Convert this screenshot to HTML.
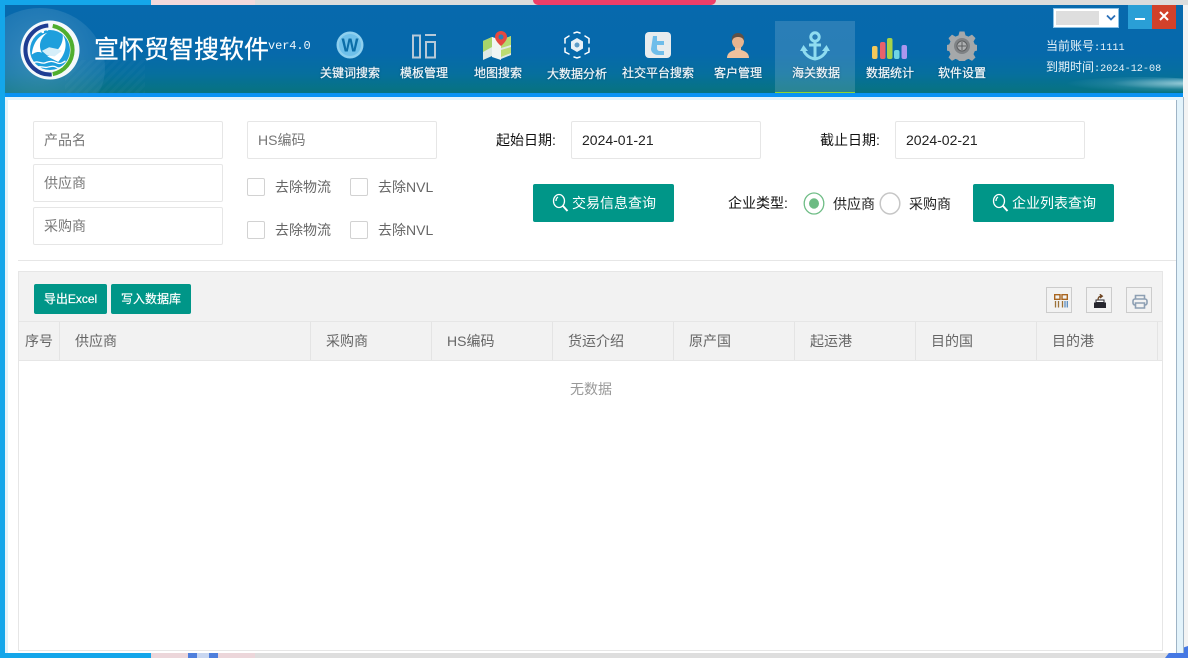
<!DOCTYPE html>
<html lang="zh"><head><meta charset="utf-8"><title>宣怀贸智搜软件</title>
<style>
html,body{margin:0;padding:0;width:1188px;height:658px;overflow:hidden;background:#f4f4f4;font-family:"Liberation Sans","Noto Sans CJK SC",sans-serif}
div,span,svg{position:absolute;box-sizing:border-box}
.t{white-space:nowrap;line-height:1}
.nav{top:67px;width:90px;text-align:center;color:#f2f6f8;font-size:12px;line-height:13px;white-space:nowrap;-webkit-text-stroke:.25px #eef4f8;text-shadow:0 0 2px rgba(0,40,70,.6)}
.inp{height:38px;width:190px;border:1px solid #e6e6e6;border-radius:2px;background:#fff;font-size:14px;line-height:36px;padding-left:10px;color:#777;white-space:nowrap}
.cb{width:18px;height:18px;border:1px solid #d2d2d2;border-radius:2px;background:#fff}
.lb{font-size:14px;line-height:18px;color:#666;white-space:nowrap}
.btn{background:#009688;color:#fff;border-radius:2px;white-space:nowrap;text-align:center}
.th{top:322px;height:38px;line-height:38px;font-size:14px;color:#666;white-space:nowrap}
.sep{top:322px;width:1px;height:38px;background:#e4e4e4}
.tool{top:287px;width:26px;height:26px;border:1px solid #ccc}
</style></head><body>
<!-- backdrop -->
<div style="left:0;top:0;width:151px;height:5px;background:#14a6ea"></div>
<div style="left:151px;top:0;width:104px;height:5px;background:#f2d9dc"></div>
<div style="left:255px;top:0;width:933px;height:5px;background:#dcdcdc"></div>
<div style="left:533px;top:0;width:183px;height:5px;background:#ee3e68;border-radius:0 0 12px 12px"></div>
<div style="left:0;top:0;width:5px;height:658px;background:#14a6ea"></div>
<div style="left:0;top:653px;width:151px;height:5px;background:#14a6ea"></div>
<div style="left:151px;top:653px;width:104px;height:5px;background:#ecd6da"></div>
<div style="left:188px;top:653px;width:30px;height:5px;background:#4f7fdc"></div>
<div style="left:197px;top:653px;width:12px;height:5px;background:#c8d6f0"></div>
<div style="left:255px;top:653px;width:933px;height:5px;background:#dedede"></div>
<div style="left:1184px;top:5px;width:4px;height:648px;background:#f3f3f3"></div>
<div style="left:1165px;top:646px;width:23px;height:12px;background:#4578e4;clip-path:polygon(20% 50%,100% 0,100% 100%,0 100%)"></div>

<!-- window -->
<div style="left:5px;top:97px;width:1179px;height:556px;background:#e3f3fb;border-right:1px solid #9fb4c6"></div>
<div style="left:8px;top:100px;width:1169px;height:553px;background:#fff;border-right:1px solid #9fb4c6"></div>

<!-- header -->
<div style="left:5px;top:5px;width:1178px;height:88px;background:linear-gradient(180deg,#0769ad 0%,#0669ab 55%,#066f9e 78%,#07737f 100%);overflow:hidden">
  <div style="left:-30px;top:3px;width:130px;height:120px;border-radius:50%;background:radial-gradient(circle at 50% 40%,rgba(130,185,215,.4),rgba(80,150,195,.2) 70%,rgba(80,150,195,0) 72%)"></div>
  <div style="left:60px;top:55px;width:80px;height:33px;background:repeating-linear-gradient(135deg,rgba(255,255,255,.025) 0 3px,transparent 3px 6px)"></div>
  <div style="left:1060px;top:72px;width:150px;height:16px;border-radius:50%;background:radial-gradient(ellipse at 85% 40%,rgba(210,240,245,.75),rgba(120,190,210,.2) 45%,rgba(120,190,210,0) 70%)"></div>
</div>
<div style="left:5px;top:93px;width:1178px;height:4px;background:#0a92f2"></div>

<!-- logo -->
<svg style="left:20px;top:20px" width="60" height="60" viewBox="0 0 66 66">
  <circle cx="33" cy="33" r="32.500" fill="#fff" opacity=".95"/>
  <circle cx="33" cy="33" r="22" fill="#1e9fdc"/>
  <path d="M33 6A27 27 0 0 0 33 60" fill="none" stroke="#1f3d93" stroke-width="4.500" transform="rotate(-4 33 33)"/>
  <path d="M36 6.500A27 27 0 0 1 36 59.500" fill="none" stroke="#4fae2e" stroke-width="4.500"/>
  <path d="M13 38C14 26 20 17 30 14C22 20 20 28 24 36C19 34 16 36 13 38Z" fill="#fff"/>
  <path d="M30 40C42 36 48 26 47 16C53 26 50 38 42 46C38 44 34 42 30 40Z" fill="#fff"/>
  <path d="M24 34l8-4 10 2 4 2-8 6-8-1z" fill="#d5eef9"/>
  <path d="M15 47c5-3 8 2 13 0s8-2 12 0 7 0 10-2M19 52c4-2 7 1 11 0s7-2 10 0 5 0 7-1" fill="none" stroke="#fff" stroke-width="1.400"/>
  <circle cx="25" cy="13" r="1.500" fill="#fff"/><circle cx="30" cy="11" r="1" fill="#fff"/>
</svg>
<div class="t" style="left:94px;top:37px;font-size:25px;line-height:26px;color:#fff;-webkit-text-stroke:.3px #fff">宣怀贸智搜软件</div>
<div class="t" style="left:268px;top:39px;font-size:12px;line-height:14px;color:#eef6fb;font-family:'Liberation Mono',monospace;letter-spacing:-.1px">ver4.0</div>

<!-- active tab -->
<div style="left:775px;top:21px;width:80px;height:72px;background:rgba(255,255,255,.14);border-bottom:1px solid #8fd32e"></div>

<!-- nav icons -->
<svg style="left:336px;top:31px" width="28" height="28" viewBox="0 0 28 28"><circle cx="14" cy="14" r="13.500" fill="#8ed0ef"/><circle cx="14" cy="14" r="11" fill="#6ec0ea"/><text x="14" y="20.500" text-anchor="middle" font-family="Liberation Sans" font-weight="700" font-size="18" fill="#0b6ea8">W</text></svg>
<svg style="left:411px;top:34px" width="26" height="26" viewBox="0 0 26 26" fill="none" stroke="#b7c9d8" stroke-width="2"><rect x="2" y="1.500" width="7" height="22"/><path d="M14 1h11"/><rect x="15" y="8" width="9" height="15.500"/></svg>
<svg style="left:482px;top:30px" width="32" height="30" viewBox="0 0 32 30"><path d="M1 11l9-4 9 3 10-4v19l-10 4-9-3-9 4z" fill="#dfe9e4"/><path d="M1 11l9-4v10l-9 5z" fill="#a8d46a"/><path d="M19 10l10-4v9l-10 3z" fill="#b5d96e"/><path d="M10 7l9 3v20l-9-3z" fill="#f1f5f3"/><path d="M19 20l10-3v6l-10 4z" fill="#bcdc72"/><path d="M19 1a6 6 0 0 1 6 6c0 4-6 9-6 9s-6-5-6-9a6 6 0 0 1 6-6z" fill="#e6483f"/><circle cx="19" cy="7" r="2.500" fill="#2b7fb8"/></svg>
<svg style="left:563px;top:31px" width="28" height="28" viewBox="0 0 28 28"><path d="M11 2L14 1l3 1M22 5l4 2.500V12M26 17v4l-4 2M17 26l-3 1-3-1M6 23l-4-2v-4M2 12V7.500L6 5" fill="none" stroke="#fff" stroke-width="1.500" stroke-linecap="round"/><path d="M14 7l6 3.500v7L14 21l-6-3.500v-7z" fill="#e9f1f7"/><circle cx="14" cy="14" r="2.500" fill="#5d9cc8"/></svg>
<svg style="left:645px;top:32px" width="26" height="26" viewBox="0 0 26 26"><rect width="26" height="26" rx="4" fill="#e8ecee"/><path d="M8 4h4v5h7v4h-7v3c0 2 1 3 3 3h4v4h-6c-4 0-7-3-7-6z" fill="#6fbdea"/></svg>
<svg style="left:726px;top:32px" width="24" height="26" viewBox="0 0 24 26"><path d="M1 26c0-5 4-7 8-8v-4h6v4c4 1 8 3 8 8z" fill="#efc19d"/><ellipse cx="12" cy="9" rx="6" ry="7.500" fill="#e6b48f"/><path d="M6 9c-1-6 3-8 6-8s7 2 6 8c-1-3-3-4-6-4s-5 1-6 4z" fill="#5e5148"/></svg>
<svg style="left:800px;top:31px" width="30" height="30" viewBox="0 0 30 30" fill="none" stroke="#8fdcf0" stroke-width="3"><circle cx="15" cy="6" r="4.200"/><path d="M15 10v18M9 14h12"/><path d="M3 17c1 6 6 10 12 11 6-1 11-5 12-11"/><path d="M0 20l3.500-6L8 20zM22 20l4.500-6L30 20z" fill="#8fdcf0" stroke="none"/></svg>
<svg style="left:872px;top:38px" width="36" height="21" viewBox="0 0 36 21"><rect x="0" y="8" width="5.500" height="13" rx="2" fill="#f4c95a"/><rect x="8" y="4" width="5.500" height="17" rx="2" fill="#e9616b"/><rect x="15" y="0" width="5.500" height="21" rx="2" fill="#a5d24a"/><rect x="22" y="12" width="5.500" height="9" rx="2" fill="#6fd5e5"/><rect x="29.500" y="7" width="5.500" height="14" rx="2" fill="#ac96ef"/></svg>
<svg style="left:947px;top:31px" width="30" height="30" viewBox="0 0 30 30"><path d="M12.500 1h5l1 4 3 1.300 3.500-2 3.500 3.500-2 3.500 1.300 3 3.700 1v5l-3.700 1-1.300 3 2 3.500-3.500 3.500-3.500-2-3 1.300-1 3.500h-5l-1-3.500-3-1.300-3.500 2-3.500-3.500 2-3.500-1.300-3-3.700-1v-5l3.700-1 1.300-3-2-3.500 3.500-3.500 3.500 2 3-1.300z" fill="#a5a8aa" transform="translate(0 -.5) scale(1 .97)"/><circle cx="15" cy="15" r="8" fill="#7f8285"/><circle cx="15" cy="15" r="5" fill="#aeb0b2" stroke="#5c5e60" stroke-width="1"/><path d="M15 11v8M11 15h8" stroke="#5c5e60" stroke-width="1"/></svg>

<!-- nav labels -->
<div class="nav" style="left:305px;top:67px">关键词搜索</div>
<div class="nav" style="left:379px;top:67px">模板管理</div>
<div class="nav" style="left:453px;top:67px">地图搜索</div>
<div class="nav" style="left:532px;top:68px">大数据分析</div>
<div class="nav" style="left:613px;top:67px">社交平台搜索</div>
<div class="nav" style="left:693px;top:67px">客户管理</div>
<div class="nav" style="left:771px;top:67px">海关数据</div>
<div class="nav" style="left:845px;top:67px">数据统计</div>
<div class="nav" style="left:917px;top:67px">软件设置</div>

<!-- window controls -->
<div style="left:1053px;top:8px;width:66px;height:20px;background:#fff;border:1px solid #8cc2e6">
  <div style="left:2px;top:2px;width:43px;height:14px;background:#dedede"></div>
  <svg style="left:52px;top:5px" width="10" height="8" viewBox="0 0 10 8"><path d="M1 1.500l4 4 4-4" fill="none" stroke="#2a6fb8" stroke-width="1.800"/></svg>
</div>
<div style="left:1128px;top:5px;width:24px;height:24px;background:#2a9fd6"><div style="left:7px;top:13px;width:10px;height:2px;background:#fff"></div></div>
<div style="left:1152px;top:5px;width:24px;height:24px;background:#d2412a">
  <svg style="left:7px;top:6px" width="10" height="10" viewBox="0 0 10 10"><path d="M1 1l8 8M9 1l-8 8" stroke="#fff" stroke-width="2"/></svg>
</div>
<div class="t" style="left:1046px;top:40px;font-size:12px;line-height:13px;color:#e9f3f9">当前账号<span style="position:static;font-family:'Liberation Mono',monospace;font-size:10.200px">:1111</span></div>
<div class="t" style="left:1046px;top:61px;font-size:12px;line-height:13px;color:#e9f3f9">到期时间<span style="position:static;font-family:'Liberation Mono',monospace;font-size:10.200px">:2024-12-08</span></div>

<!-- form -->
<div class="inp" style="left:33px;top:121px">产品名</div>
<div class="inp" style="left:33px;top:164px">供应商</div>
<div class="inp" style="left:33px;top:207px">采购商</div>
<div class="inp" style="left:247px;top:121px">HS编码</div>
<div class="cb" style="left:247px;top:178px"></div><div class="lb" style="left:275px;top:178px">去除物流</div>
<div class="cb" style="left:350px;top:178px"></div><div class="lb" style="left:378px;top:178px">去除NVL</div>
<div class="cb" style="left:247px;top:221px"></div><div class="lb" style="left:275px;top:221px">去除物流</div>
<div class="cb" style="left:350px;top:221px"></div><div class="lb" style="left:378px;top:221px">去除NVL</div>

<div class="lb" style="left:496px;top:131px;color:#111">起始日期:</div>
<div class="inp" style="left:571px;top:121px;color:#222">2024-01-21</div>
<div class="lb" style="left:820px;top:131px;color:#111">截止日期:</div>
<div class="inp" style="left:895px;top:121px;color:#222">2024-02-21</div>

<div class="btn" style="left:533px;top:184px;width:141px;height:38px"></div>
<svg style="left:551px;top:193px" width="19" height="20" viewBox="0 0 19 20" fill="none" stroke="#fff" stroke-width="1.300"><ellipse cx="8" cy="8" rx="5.500" ry="6.500"/><path d="M12 13l4.500 5" stroke-width="2"/><path d="M5 8c0-2 .5-3 2-4"/></svg>
<div class="t" style="left:572px;top:196px;font-size:14px;line-height:14px;color:#fff">交易信息查询</div>

<div class="lb" style="left:728px;top:194px;color:#111">企业类型:</div>
<svg style="left:803px;top:192px" width="22" height="23" viewBox="0 0 22 23"><ellipse cx="11" cy="11.500" rx="9.800" ry="10.500" fill="#fff" stroke="#6fbd86" stroke-width="1.300"/><ellipse cx="11" cy="11.500" rx="5" ry="5.200" fill="#6dbb83"/></svg>
<div class="lb" style="left:833px;top:195px;color:#222">供应商</div>
<svg style="left:879px;top:192px" width="22" height="23" viewBox="0 0 22 23"><ellipse cx="11" cy="11.500" rx="9.800" ry="10.500" fill="#fff" stroke="#c6c6c6" stroke-width="1.500"/></svg>
<div class="lb" style="left:909px;top:195px;color:#222">采购商</div>

<div class="btn" style="left:973px;top:184px;width:141px;height:38px"></div>
<svg style="left:991px;top:193px" width="19" height="20" viewBox="0 0 19 20" fill="none" stroke="#fff" stroke-width="1.300"><ellipse cx="8" cy="8" rx="5.500" ry="6.500"/><path d="M12 13l4.500 5" stroke-width="2"/><path d="M5 8c0-2 .5-3 2-4"/></svg>
<div class="t" style="left:1012px;top:196px;font-size:14px;line-height:14px;color:#fff">企业列表查询</div>

<div style="left:18px;top:260px;width:1158px;height:1px;background:#e6e6e6"></div>

<!-- table panel -->
<div style="left:18px;top:271px;width:1145px;height:380px;background:#fff;border:1px solid #e6e6e6"></div>
<div style="left:19px;top:272px;width:1143px;height:88px;background:#f2f2f2"></div>
<div style="left:19px;top:321px;width:1143px;height:1px;background:#e6e6e6"></div>
<div style="left:19px;top:360px;width:1143px;height:1px;background:#e6e6e6"></div>

<div class="btn" style="left:34px;top:284px;width:73px;height:30px;font-size:12px;line-height:30px;-webkit-text-stroke:.2px #fff">导出Excel</div>
<div class="btn" style="left:111px;top:284px;width:80px;height:30px;font-size:12px;line-height:30px;-webkit-text-stroke:.2px #fff">写入数据库</div>

<div class="tool" style="left:1046px"></div>
<svg style="left:1054px;top:294px" width="14" height="14" viewBox="0 0 14 14" fill="none"><path d="M.7.700h5.300v4.600H.700zM8 .700h5.300v4.600H8z" stroke="#a9651f" stroke-width="1.400"/><path d="M1.500 7v6.500M4.500 7v6.500M8.500 7v6.500" stroke="#9c7238" stroke-width="1.300"/><path d="M11 7v6.500M13.300 7v6.500" stroke="#5b8dc0" stroke-width="1.300"/></svg>
<div class="tool" style="left:1086px"></div>
<svg style="left:1093px;top:294px" width="14" height="15" viewBox="0 0 14 15"><path d="M1 8.500h12V14H1z" fill="#26262e"/><path d="M3 6h8v2.500H3z" fill="#fff" stroke="#26262e"/><path d="M5 6c0-2.500 1.200-4 3.500-4M6.800.300l2.500 1.800L7 4" fill="none" stroke="#6d4420" stroke-width="1.300"/></svg>
<div class="tool" style="left:1126px"></div>
<svg style="left:1132px;top:294px" width="16" height="15" viewBox="0 0 16 15" fill="none" stroke="#8d9fb3" stroke-width="1.600"><path d="M3.500 5V1.500h9V5"/><rect x="1" y="5" width="14" height="6" rx="2"/><path d="M3.500 9h9v5h-9z" fill="#f2f2f2"/></svg>

<div class="sep" style="left:59px"></div><div class="sep" style="left:310px"></div><div class="sep" style="left:431px"></div><div class="sep" style="left:552px"></div><div class="sep" style="left:673px"></div><div class="sep" style="left:794px"></div><div class="sep" style="left:915px"></div><div class="sep" style="left:1036px"></div><div class="sep" style="left:1157px"></div>
<div class="th" style="left:25px">序号</div>
<div class="th" style="left:75px">供应商</div>
<div class="th" style="left:326px">采购商</div>
<div class="th" style="left:447px">HS编码</div>
<div class="th" style="left:568px">货运介绍</div>
<div class="th" style="left:689px">原产国</div>
<div class="th" style="left:810px">起运港</div>
<div class="th" style="left:931px">目的国</div>
<div class="th" style="left:1052px">目的港</div>
<div class="t" style="left:570px;top:382px;font-size:14px;line-height:14px;color:#999">无数据</div>
</body></html>
